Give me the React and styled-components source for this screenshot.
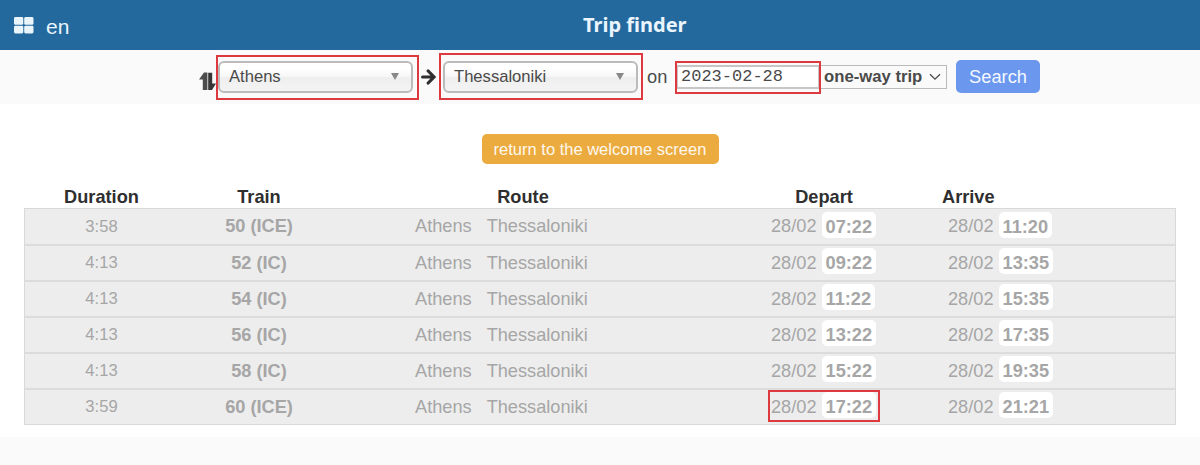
import React from "react";
import styled, { createGlobalStyle, css } from "styled-components";

const TRIPS = [
    { duration: "3:58", train: "50 (ICE)", depart: "07:22", arrive: "11:20" },
    { duration: "4:13", train: "52 (IC)", depart: "09:22", arrive: "13:35" },
    { duration: "4:13", train: "54 (IC)", depart: "11:22", arrive: "15:35" },
    { duration: "4:13", train: "56 (IC)", depart: "13:22", arrive: "17:35" },
    { duration: "4:13", train: "58 (IC)", depart: "15:22", arrive: "19:35" },
    {
        duration: "3:59",
        train: "60 (ICE)",
        depart: "17:22",
        arrive: "21:21",
        marked: true,
    },
];

const App = () => {
    return (
        <Page>
            <GlobalStyle />
            <Header>
                <HeaderLeft>
                    <MenuIcon />
                    <Language>en</Language>
                </HeaderLeft>
                <Title>Trip finder</Title>
            </Header>

            <SearchBar>
                <SwapIcon />
                <Marked $inset="-6px -6px -7px -2px">
                    <StationSelect>
                        Athens
                        <Caret />
                    </StationSelect>
                </Marked>
                <ArrowIcon />
                <Marked $inset="-8px -5px -7px -4px">
                    <StationSelect>
                        Thessaloniki
                        <Caret />
                    </StationSelect>
                </Marked>
                <On>on</On>
                <Marked $inset="-4px -1px -5px -1px">
                    <DateInput>2023-02-28</DateInput>
                </Marked>
                <TripType>
                    one-way trip
                    <ChevronIcon />
                </TripType>
                <SearchButton>Search</SearchButton>
            </SearchBar>

            <Main>
                <ReturnButton>return to the welcome screen</ReturnButton>
                <TableHead>
                    <span>Duration</span>
                    <span>Train</span>
                    <span>Route</span>
                    <span>Depart</span>
                    <span>Arrive</span>
                </TableHead>
                <TableBody>
                    {TRIPS.map((trip) => (
                        <TripRow key={trip.train}>
                            <Duration>{trip.duration}</Duration>
                            <Train>{trip.train}</Train>
                            <Route>
                                <span>Athens</span>
                                <span>Thessaloniki</span>
                            </Route>
                            <Stop $indent={65}>
                                <Marked $inset={trip.marked && "-2px -4px 0 -3px"}>
                                    <span>28/02</span>
                                    <Time>{trip.depart}</Time>
                                </Marked>
                            </Stop>
                            <Stop $indent={6}>
                                <span>28/02</span>
                                <Time>{trip.arrive}</Time>
                            </Stop>
                        </TripRow>
                    ))}
                </TableBody>
            </Main>
        </Page>
    );
};

const MenuIcon = () => (
    <svg width="20" height="17" viewBox="0 0 20 17" fill="#e9f4fb">
        <rect x="0" y="0" width="9.3" height="7.8" rx="1.4" />
        <rect x="10.2" y="0" width="9.3" height="7.8" rx="1.4" />
        <rect x="0" y="8.7" width="9.3" height="7.8" rx="1.4" />
        <rect x="10.2" y="8.7" width="9.3" height="7.8" rx="1.4" />
    </svg>
);

const SwapSvg = styled.svg`
    flex: none;
    margin: 9px 2px 0 0;
`;

const SwapIcon = () => (
    <SwapSvg width="17" height="19" viewBox="0 0 17 19">
        <path d="M5 0.5 H8.4 V18 H3.8 V7.5 H0 Z" fill="#4c4c4c" />
        <path d="M9.2 0.8 H13.2 V11.5 H17 L13 18 H9.2 Z" fill="#363636" />
    </SwapSvg>
);

const ArrowSvg = styled.svg`
    flex: none;
    margin: 0 7px 0 8px;
`;

const ArrowIcon = () => (
    <ArrowSvg
        width="15"
        height="16"
        viewBox="0 0 15 16"
        fill="none"
        stroke="#2f2f2f"
        strokeWidth="3.2"
        strokeLinecap="round"
    >
        <path d="M1.6 8 H12 M7.2 2 L13 8 L7.2 14" />
    </ArrowSvg>
);

const ChevronIcon = () => (
    <svg
        width="12"
        height="8"
        viewBox="0 0 12 8"
        fill="none"
        stroke="#4a4a4a"
        strokeWidth="1.3"
    >
        <path d="M1 1.2 L6 6.2 L11 1.2" />
    </svg>
);

const GlobalStyle = createGlobalStyle`
    * {
        box-sizing: border-box;
    }
    body {
        margin: 0;
        background: #fafafa;
        font-family: "Liberation Sans", Arial, sans-serif;
    }
`;

const Page = styled.div`
    width: 1200px;
    height: 465px;
    overflow: hidden;
    background: #fafafa;
`;

const Header = styled.header`
    display: grid;
    grid-template-columns: 569px auto 1fr;
    align-items: center;
    height: 50px;
    padding: 0 0 0 14px;
    background: #23699d;
    color: #eaf5fd;
`;

const HeaderLeft = styled.div`
    display: flex;
    align-items: center;
    gap: 12px;
`;

const Language = styled.span`
    font-size: 21px;
    line-height: 24px;
    padding-top: 3px;
`;

const Title = styled.h1`
    margin: 0;
    font-family: "Noto Sans", sans-serif;
    font-size: 20px;
    font-weight: 700;
    line-height: 24px;
`;

const SearchBar = styled.div`
    display: flex;
    align-items: center;
    height: 54px;
    padding: 0 0 1px 199px;
    color: #4a4a4a;
`;

/* red frame drawn around its content */
const Marked = styled.div`
    position: relative;
    display: flex;
    align-items: center;
    flex: none;
    ${({ $inset }) =>
        $inset &&
        css`
            &::after {
                content: "";
                position: absolute;
                inset: ${$inset};
                border: 2px solid #dc3a3f;
            }
        `}
`;

const StationSelect = styled.div`
    display: flex;
    align-items: center;
    justify-content: space-between;
    width: 195px;
    height: 32px;
    padding: 0 12px 0 9px;
    border: 2px solid #bbb;
    border-radius: 6px;
    background: linear-gradient(#fff 20%, #f6f6f6 50%, #eee 52%, #f4f4f4 100%);
    font-size: 16.6px;
`;

const Caret = styled.i`
    border: 4.5px solid transparent;
    border-top: 7px solid #888;
    border-bottom: 0;
`;

const On = styled.span`
    width: 38px;
    padding-left: 9px;
    font-size: 18.3px;
`;

const DateInput = styled.div`
    width: 144px;
    height: 24px;
    padding-left: 3px;
    border: 2px solid #c6c6c6;
    background: #fff;
    font-family: "Liberation Mono", monospace;
    font-size: 17px;
    line-height: 20px;
`;

const TripType = styled.div`
    display: flex;
    align-items: center;
    justify-content: space-between;
    width: 127px;
    height: 24px;
    padding: 0 5px 0 4px;
    border: 1.5px solid #bbb;
    border-left: 0;
    font-size: 16.7px;
    font-weight: bold;
    white-space: nowrap;
`;

const SearchButton = styled.button`
    width: 84px;
    height: 33px;
    margin-left: 9px;
    padding: 0;
    border: 0;
    border-radius: 5px;
    background: #6b97ee;
    color: #f4f8ff;
    font-family: inherit;
    font-size: 18.3px;
`;

const Main = styled.main`
    display: flex;
    flex-direction: column;
    height: 333px;
    padding: 30px 24px 0;
    background: #fff;
`;

const ReturnButton = styled.button`
    align-self: center;
    width: 237px;
    height: 30px;
    padding: 0;
    border: 0;
    border-radius: 5px;
    background: #ebab3f;
    color: #fff8ee;
    font-family: inherit;
    font-size: 16.5px;
`;

const columns = css`
    display: grid;
    grid-template-columns: 153px 162px 366px 236px 1fr;
`;

const TableHead = styled.div`
    ${columns}
    height: 44px;
    padding: 22px 0 0 1px;
    color: #2f2f2f;
    font-size: 18.2px;
    font-weight: bold;
    line-height: 22px;
    text-align: center;

    span:last-child {
        justify-self: start;
    }
`;

const TableBody = styled.div`
    border: 1px solid #d9d9d9;
    background: #ededed;
`;

const TripRow = styled.div`
    ${columns}
    align-items: center;
    height: 35px;
    color: #a6a6a6;
    font-size: 18.2px;

    & + & {
        height: 36px;
        border-top: 2px solid #dcdcdc;
    }
`;

const Duration = styled.span`
    font-size: 16.6px;
    text-align: center;
`;

const Train = styled.b`
    text-align: center;
`;

const Route = styled.div`
    display: flex;
    gap: 15px;
    padding-left: 75px;
`;

const Stop = styled.div`
    display: flex;
    align-items: center;
    padding-left: ${({ $indent }) => $indent}px;
`;

const Time = styled.b`
    margin: 0 0 4px 5px;
    padding: 5px 4px 0;
    border-radius: 5px;
    background: #fff;
    line-height: 21px;
`;

export default App;
